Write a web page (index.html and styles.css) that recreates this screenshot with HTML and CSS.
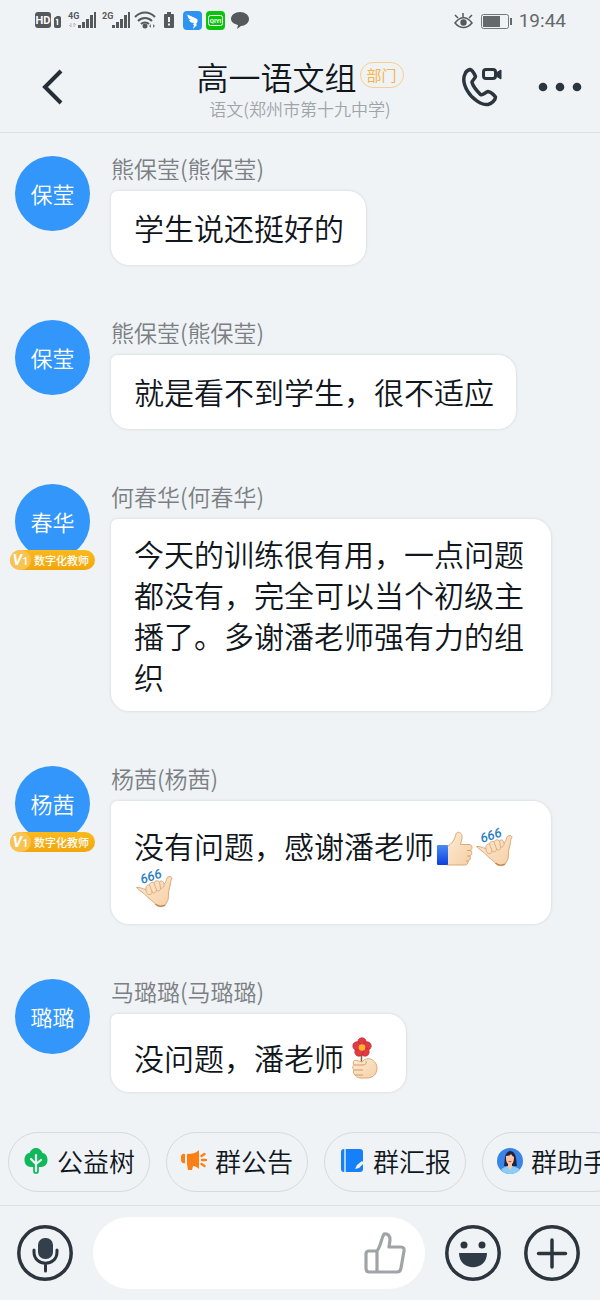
FILE: index.html
```html
<!DOCTYPE html>
<html lang="zh-CN">
<head>
<meta charset="utf-8">
<meta name="viewport" content="width=device-width, initial-scale=1">
<title>高一语文组</title>
<link rel="stylesheet" href="styles.css">
</head>
<body>
<svg class="defs" aria-hidden="true">
  <defs>
    <linearGradient id="skin" x1="0" y1="0" x2="1" y2="1">
      <stop offset="0" stop-color="#fdebd5"/><stop offset="1" stop-color="#f6cfa4"/>
    </linearGradient>
    <linearGradient id="cuff" x1="0" y1="0" x2="0" y2="1">
      <stop offset="0" stop-color="#4a8cf5"/><stop offset="1" stop-color="#0b3fe0"/>
    </linearGradient>
    <symbol id="shaka" viewBox="0 0 40 40">
      <path d="M2.500 19.500C6 19 9 21 12 21.500C11.500 18.500 13 16.500 15.500 17C16 14.500 18.500 13.500 20 15C21 12.500 24 12 25.500 14C27 12 29.500 13 30 16C32 15 32 12 33 10C34 8 38 8 38 10.500C36 12 37 16 35.500 20C34 24 34.800 28 34 32L31 37.500C28 39.500 23.500 39 21.500 36C19 33 15.500 31.500 13 28.500C10 25 6 23 2.500 19.500Z" fill="url(#skin)" stroke="#d8a270" stroke-width=".9"/>
      <path d="M12 21.500C12 25 13.500 27 16 26.500C18 26.500 18 24.500 18 23.500C19 26 22.500 25 22.500 22C24.500 24 27 22.500 26.500 20C28.500 21 30.500 18.500 30 16M15.500 17L18 23.500M20 15L22.500 22M25.500 14L26.500 20" fill="none" stroke="#dca77a" stroke-width=".9"/>
      <path d="M21.500 36C24 38.500 28 38.500 31 37" fill="none" stroke="#bf8450" stroke-width="1.200"/>
      <text x="8" y="16" class="six" transform="rotate(-18 8 16)">666</text>
    </symbol>
  </defs>
</svg>

<header class="top">
  <div class="status">
    <div class="status-left">
      <svg width="226" height="24" viewBox="0 0 226 24" role="img" aria-label="状态图标">
        <g fill="#56595c">
          <rect x="1" y="3" width="16" height="16" rx="3"/>
          <path d="M20 9l3-2h2c1.500 0 2 1 2 2v8c0 1-.5 2-2 2h-3c-1.500 0-2-1-2-2z"/>
          <path d="M44 16h3v3h-3zM48 13h3v6h-3zM52 10h3v9h-3zM56 6h3v13h-3zM60 3h2v16h-2z"/>
          <path d="M78 16h3v3h-3zM82 13h3v6h-3zM86 10h3v9h-3zM90 6h3v13h-3zM94 3h2v16h-2z"/>
          <circle cx="111" cy="17" r="2.500"/>
          <path d="M133 3h4v2h2q1 0 1 1v12q0 1-1 1h-8q-1 0-1-1V6q0-1 1-1h2z"/>
          <path d="M206 3c5 0 9 3 9 7s-4 7-8 7l-4 3 1-4c-4-1-7-3-7-6 0-4 4-7 9-7z"/>
        </g>
        <path d="M101 8c6-6 14-6 20 0M104 12c4-4 10-4 14 0M107 15c2-2 6-2 8 0" fill="none" stroke="#56595c" stroke-width="2"/>
        <path d="M117 15v4l-2-2zM119 15v4l2-2z" fill="#777"/>
        <path d="M37 14v4l-2-2M40 18v-4l2 2" fill="none" stroke="#b4b7ba"/>
        <path d="M23.500 10v6M22 11l1.500-1" stroke="#eff3f6" stroke-width="1.500"/>
        <path d="M135 8v5M135 14.500v2" stroke="#eff3f6" stroke-width="2"/>
        <text x="9" y="15" class="g-hd">HD</text>
        <text x="34" y="10" class="g-net">4G</text>
        <text x="68" y="10" class="g-net">2G</text>
        <rect x="149" y="2" width="19" height="19" rx="4" fill="#2d94f4"/>
        <path d="M152 5c4 2 8 3 11 5 1 1 1 3-1 5l1 1-4 4 1-4h-1l1-2c-3 0-4-1-5-3l2 0c-3-1-3-3-4-6z" fill="#fff"/>
        <rect x="172" y="2" width="19" height="19" rx="4" fill="#0bc30b"/>
        <rect x="174.500" y="6.500" width="14" height="10" rx="2" fill="none" stroke="#fff"/>
        <text x="181.500" y="14" class="g-iq">QIYI</text>
      </svg>
    </div>
    <div class="status-right">
      <svg width="60" height="20" viewBox="0 0 60 20" role="img" aria-label="电池">
        <path d="M2 12c5-7 12-7 17 0-5 6-12 6-17 0zM10 6V2M5 7L2 4M16 7l3-3" fill="none" stroke="#56595c" stroke-width="1.500"/>
        <circle cx="10.500" cy="11.500" r="3.200" fill="#56595c"/>
        <rect x="28.500" y="3.500" width="27" height="14" rx="2" fill="none" stroke="#75787a"/>
        <path d="M30 5h17v11H30zM57 7h2v7h-2z" fill="#66696b"/>
      </svg>
      <time>19:44</time>
    </div>
  </div>
  <div class="nav">
    <button class="icon-btn nav-back" aria-label="返回">
      <svg width="24" height="38" viewBox="0 0 24 38"><path d="M20 3L4 19l16 16" fill="none" stroke="#252e36" stroke-width="4"/></svg>
    </button>
    <div class="heading">
      <div class="heading-row"><h1>高一语文组</h1><span class="dept">部门</span></div>
      <p>语文(郑州市第十九中学)</p>
    </div>
    <div class="nav-actions">
      <button class="icon-btn" aria-label="通话">
        <svg width="44" height="42" viewBox="0 0 44 42" fill="none" stroke="#2c353e" stroke-width="3.500" stroke-linejoin="round">
          <path d="M5 8C6 5 8 4 10 3.500C12 4 14 7 15.500 10.500C15 13 12 14 12 16.500C13 20 17 25 20.500 28.500C23 30 25 26 28 25.500C31 26 34 29 35.500 31C35.500 34 32 37.500 28 38.500C22 39.500 12 33 7.500 25C3.500 18 3 12 5 8Z"/>
          <rect x="23.500" y="3.500" width="12" height="9" rx="2.500" stroke-width="3"/>
          <path d="M36 7l5-3v9l-5-3z" fill="#2c353e" stroke-width="1"/>
        </svg>
      </button>
      <button class="icon-btn" aria-label="更多">
        <svg width="44" height="10" viewBox="0 0 44 10" fill="#2c353e"><circle cx="5" cy="5" r="4.300"/><circle cx="22" cy="5" r="4.300"/><circle cx="39" cy="5" r="4.300"/></svg>
      </button>
    </div>
  </div>
</header>

<main class="chat">
  <article class="msg">
    <div class="avatar">保莹</div>
    <div class="msg-body"><div class="name">熊保莹(熊保莹)</div><p class="bubble">学生说还挺好的</p></div>
  </article>
  <article class="msg">
    <div class="avatar">保莹</div>
    <div class="msg-body"><div class="name">熊保莹(熊保莹)</div><p class="bubble">就是看不到学生，很不适应</p></div>
  </article>
  <article class="msg">
    <div class="avatar">春华<span class="tag"><span class="tag-v"><i>V</i>1</span>数字化教师</span></div>
    <div class="msg-body"><div class="name">何春华(何春华)</div><p class="bubble bubble-long">今天的训练很有用，一点问题都没有，完全可以当个初级主播了。多谢潘老师强有力的组织</p></div>
  </article>
  <article class="msg">
    <div class="avatar">杨茜<span class="tag"><span class="tag-v"><i>V</i>1</span>数字化教师</span></div>
    <div class="msg-body"><div class="name">杨茜(杨茜)</div><p class="bubble bubble-emoji">没有问题，感谢潘老师<svg class="emoji" viewBox="0 0 40 40" role="img" aria-label="赞"><path d="M13 19.500C18 17 21 12 22 7C22.500 4.500 27 4.500 28 8.500C28.500 12 27 14 26.500 17.500H35C38.500 17.500 39 22 36.500 23C38.500 25 38 28 36 29C37 31 36 33.500 34 34C34.500 36 33 38 31 38H13Z" fill="url(#skin)" stroke="#d8a06c" stroke-width=".9"/><path d="M33 23.500h4M33 29h3M32 34h2" stroke="#d8a06c" fill="none"/><rect x="3" y="18" width="11" height="20" rx="1" fill="url(#cuff)"/></svg><svg class="emoji" viewBox="0 0 40 40" role="img" aria-label="666"><use href="#shaka"/></svg><svg class="emoji" viewBox="0 0 40 40" role="img" aria-label="666"><use href="#shaka"/></svg></p></div>
  </article>
  <article class="msg">
    <div class="avatar">璐璐</div>
    <div class="msg-body"><div class="name">马璐璐(马璐璐)</div><p class="bubble bubble-flower">没问题，潘老师<svg class="emoji" viewBox="0 0 40 40" role="img" aria-label="送花"><path d="M18 12c-1 5 0 9-1 14" stroke="#7c6938" stroke-width="1.500" fill="none"/><g fill="#e33b45" stroke="#c0262e" stroke-width=".7"><circle cx="18" cy="3" r="4.200"/><circle cx="23" cy="7" r="4.200"/><circle cx="21" cy="13" r="4.200"/><circle cx="15" cy="13" r="4.200"/><circle cx="13" cy="7" r="4.200"/></g><circle cx="18" cy="8.500" r="3.300" fill="#ffb62c"/><path d="M18 23C23 16 33 21 33 29C33 36 28 39.500 21 39C16 39.500 12 38.500 11 36C9 34 9 32 10 31C8 29 8.500 27 10 26C8 23 10 20.500 13 21.500Z" fill="url(#skin)" stroke="#d8a06c" stroke-width=".9"/><path d="M10 26h8c4 0 5-2 4-4M10 31h9M11 36h8" stroke="#d39a65" fill="none"/></svg></p></div>
  </article>
</main>

<footer class="bottom">
  <nav class="chips">
    <button class="chip"><svg width="26" height="28" viewBox="0 0 26 28"><path d="M13 1C16 1 18.500 3 19.500 6C23 6.500 24.500 9.500 24.500 13C24.500 17 22 20 18 20H8C4 20 1.500 17 1.500 13C1.500 9.500 3 6.500 6.500 6C7.500 3 10 1 13 1Z" fill="#0fb85a"/><path d="M13 8v16M8 12l5 5 5-4" stroke="#eff3f6" stroke-width="2.200" fill="none" stroke-linecap="round"/><path d="M11 19v5q0 2 2 2t2-2v-5" fill="none" stroke="#0fb85a" stroke-width="1.700"/></svg>公益树</button>
    <button class="chip"><svg width="26" height="28" viewBox="0 0 26 28" fill="#fb7f12"><path d="M0 9q1-3 4-2v9q-3 1-4-2zM6 7c5 0 9-1 12-4v19c-2-2-4-3-6-3l-1 4H7l-1-6z"/><path d="M20.500 9l3-2M21 13h4M20.500 17l3 2" stroke="#fb7f12" stroke-width="2.300" stroke-linecap="round"/></svg>群公告</button>
    <button class="chip"><svg width="26" height="28" viewBox="0 0 26 28"><path d="M2 5q0-3 3-3h16q3 0 3 3v17q0 3-3 3H5q-3 0-3-3z" fill="#1580fa"/><path d="M6 2v23" stroke="#eff3f6" stroke-width="1.400"/><path d="M16 22l2-4 5-4 2 2-5 5z" fill="#eff3f6"/></svg>群汇报</button>
    <button class="chip"><svg width="26" height="28" viewBox="0 0 26 28"><circle cx="13" cy="14" r="13" fill="#3984e8"/><path d="M7 19C8 14 7 5 13 4C20 4 19 14 20 19z" fill="#26223a"/><path d="M4 23c2-3 5-3 7-4h4c2 1 6 1 8 4q-4 4-10 4t-9-4z" fill="#8ccdf5"/><path d="M9 9q4 0 5-2 1 2 3 3c0 4-1 6-2 7v3l-2 3-2-3v-3c-2-2-2-4-2-8z" fill="#fbc8a6"/><path d="M11.500 14.500h3" stroke="#e34c4c"/></svg>群助手</button>
  </nav>
  <div class="composer">
    <button class="icon-btn" aria-label="语音"><svg width="56" height="56" viewBox="0 0 56 56" fill="none" stroke="#2c353e" stroke-width="3.500"><circle cx="28" cy="28" r="26.200"/><rect x="21" y="13" width="15" height="21" rx="7" fill="#333f4d" stroke="none"/><path d="M17 25v2c0 15 23 15 23 0v-2M28.500 39v7" stroke-width="3" stroke-linecap="round"/></svg></button>
    <div class="field">
      <input type="text" aria-label="输入消息">
      <button class="icon-btn" aria-label="点赞"><svg width="42" height="42" viewBox="0 0 42 42" fill="none" stroke="#a1a4a7" stroke-width="3.200" stroke-linejoin="round"><path d="M13 19C17 14 17 7 20 2C24 1 26 4 26 8L25 15H37Q40.500 15 40 19L37 36Q36.500 40 33 40H5Q2 40 2 36V22Q2 19 5 19H13V40"/></svg></button>
    </div>
    <div class="composer-actions">
      <button class="icon-btn" aria-label="表情"><svg width="56" height="56" viewBox="0 0 56 56"><circle cx="28" cy="28" r="26.200" fill="none" stroke="#2c353e" stroke-width="3.500"/><circle cx="19" cy="20" r="3.500" fill="#2c353e"/><circle cx="37" cy="20" r="3.500" fill="#2c353e"/><path d="M14 28h28c0 19-28 19-28 0z" fill="#2f3c48"/></svg></button>
      <button class="icon-btn" aria-label="更多功能"><svg width="56" height="56" viewBox="0 0 56 56" fill="none" stroke="#2c353e" stroke-width="3.500" stroke-linecap="round"><circle cx="28" cy="28" r="26.200"/><path d="M28 15v27M14.500 28.500h27"/></svg></button>
    </div>
  </div>
</footer>
</body>
</html>
```
FILE: styles.css
```css
* { box-sizing: border-box; }
body {
  margin: 0;
  min-height: 100vh;
  display: flex;
  flex-direction: column;
  background: #eff3f6;
  color: #10161c;
  font-family: "Noto Sans CJK SC", "Noto Sans", sans-serif;
  font-weight: 350;
  overflow-x: hidden;
}
h1, p { margin: 0; font-weight: inherit; }
svg { display: block; flex: none; }
button { font: inherit; color: inherit; cursor: pointer; }
.defs { position: absolute; width: 0; height: 0; }
.icon-btn { padding: 0; border: 0; background: none; flex: none; }

.top { border-bottom: 1px solid #dde1e4; }
.status {
  display: flex;
  justify-content: space-between;
  align-items: center;
  height: 42px;
  padding: 0 34px;
}
.status-right { display: flex; align-items: center; gap: 6px; }
.status time { font: 400 19px/24px Roboto, sans-serif; color: #66696c; }
.g-hd, .g-net, .g-iq { font-family: Roboto, sans-serif; font-weight: 700; }
.g-hd { font-size: 11px; fill: #fff; text-anchor: middle; }
.g-net { font-size: 9px; fill: #56595c; }
.g-iq { font-size: 6px; fill: #fff; text-anchor: middle; }

.nav {
  display: grid;
  grid-template-columns: 1fr auto 1fr;
  align-items: center;
  height: 90px;
  padding: 0 18px;
}
.nav-back { justify-self: start; margin-left: 23px; }
.heading { display: flex; flex-direction: column; align-items: center; }
.heading-row { display: flex; align-items: center; gap: 3px; }
.heading h1 { font-size: 32px; line-height: 46px; }
.heading p { font-size: 17px; line-height: 20px; color: #a0a4a8; margin-bottom: 2px; }
.dept {
  margin-bottom: 2px;
  padding: 0 6px;
  border: 1px solid #f8cf8c;
  border-radius: 14px;
  font-size: 15px;
  line-height: 24px;
  font-weight: 400;
  color: #f6b44c;
}
.nav-actions { display: flex; align-items: center; justify-content: flex-end; gap: 34px; }

.chat {
  flex: 1;
  display: flex;
  flex-direction: column;
  gap: 55px;
  padding: 23px 49px 40px 15px;
}
.msg { display: flex; align-items: flex-start; gap: 21px; }
.avatar {
  position: relative;
  flex: none;
  width: 75px;
  height: 75px;
  border-radius: 50%;
  background: #3296fa;
  color: #fff;
  font-size: 22px;
  line-height: 75px;
  text-align: center;
}
.tag {
  position: absolute;
  left: -5px;
  top: 66px;
  display: flex;
  align-items: center;
  gap: 3px;
  width: 85px;
  height: 20px;
  border-radius: 10px;
  background: linear-gradient(#fbb91d, #f2a60d);
  font-size: 11px;
  line-height: 20px;
  font-weight: 500;
  white-space: nowrap;
}
.tag-v {
  width: 21px;
  height: 20px;
  border-radius: 10px;
  background: #f8c352;
  font-family: Roboto, sans-serif;
  font-size: 11px;
}
.tag-v i { font-size: 15px; font-weight: 700; }
.msg-body { min-width: 0; }
.name { font-size: 23px; line-height: 25px; margin-bottom: 10px; color: #7b7f83; }
.bubble {
  width: fit-content;
  max-width: 440px;
  padding: 16px 22px 17px 23px;
  background: #fff;
  border-radius: 6px 18px 18px 18px;
  box-shadow: 0 0 3px #cdd1d4;
  font-size: 30px;
  line-height: 41px;
}
.bubble-long { padding-top: 14px; padding-bottom: 14px; }
.bubble-emoji { padding-top: 24px; padding-bottom: 17px; }
.bubble-flower { padding-top: 23px; padding-bottom: 14px; }
.emoji { display: inline-block; width: 40px; height: 40px; vertical-align: middle; margin: -9px 0 -3px; overflow: visible; }
.six { font: italic 500 13px Roboto, sans-serif; fill: #2c80bf; }

.bottom { overflow: hidden; }
.chips { display: flex; gap: 16px; padding: 0 8px 13px; overflow: hidden; }
.chip {
  flex: none;
  display: flex;
  align-items: center;
  gap: 8px;
  height: 60px;
  padding: 0 14px 3px;
  border: 1px solid #d5dade;
  border-radius: 30px;
  background: none;
  font-size: 26px;
}
.composer {
  display: flex;
  align-items: center;
  gap: 20px;
  padding: 11px 20px 11px 17px;
  border-top: 1px solid #dde1e4;
}
.composer-actions { display: flex; gap: 23px; }
.field {
  flex: 1;
  min-width: 0;
  display: flex;
  align-items: center;
  height: 72px;
  padding: 0 19px 0 30px;
  border-radius: 36px;
  background: #fff;
}
.field input { flex: 1; min-width: 0; border: 0; outline: 0; background: none; font: inherit; font-size: 28px; }
```
